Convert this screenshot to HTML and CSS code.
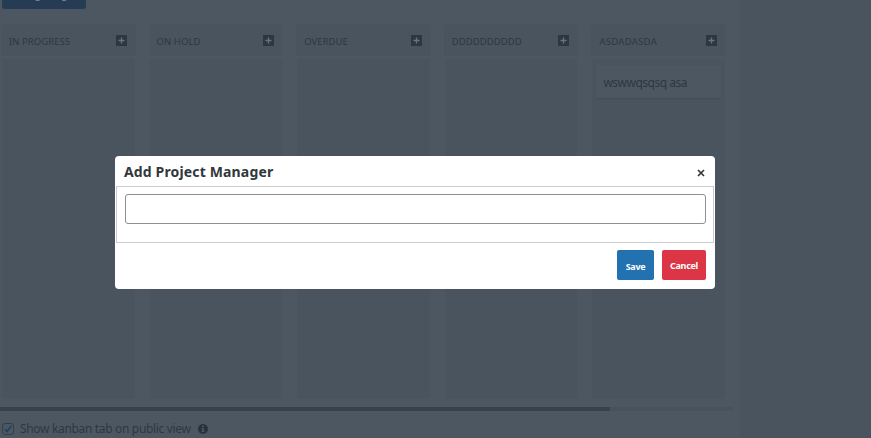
FILE: index.html
```html
<!DOCTYPE html>
<html lang="en">
<head>
<meta charset="utf-8">
<title>Project board</title>
<link rel="stylesheet" href="styles.css">
</head>
<body>
<main class="page">
  <button class="stage-button">Assign Tags</button>
  <div class="board">
    <section class="column">
      <header class="column-head"><span class="column-name">IN PROGRESS</span><svg class="plus" viewBox="0 0 11 11"><path class="plus-box" d="M0 0h11v11H0z"/><path class="plus-sign" d="M2.5 5.5h6M5.5 2.5v6"/></svg></header>
      <div class="column-body"></div>
    </section>
    <section class="column">
      <header class="column-head"><span class="column-name">ON HOLD</span><svg class="plus" viewBox="0 0 11 11"><path class="plus-box" d="M0 0h11v11H0z"/><path class="plus-sign" d="M2.5 5.5h6M5.5 2.5v6"/></svg></header>
      <div class="column-body"></div>
    </section>
    <section class="column">
      <header class="column-head"><span class="column-name">OVERDUE</span><svg class="plus" viewBox="0 0 11 11"><path class="plus-box" d="M0 0h11v11H0z"/><path class="plus-sign" d="M2.5 5.5h6M5.5 2.5v6"/></svg></header>
      <div class="column-body"></div>
    </section>
    <section class="column">
      <header class="column-head"><span class="column-name">DDDDDDDDDD</span><svg class="plus" viewBox="0 0 11 11"><path class="plus-box" d="M0 0h11v11H0z"/><path class="plus-sign" d="M2.5 5.5h6M5.5 2.5v6"/></svg></header>
      <div class="column-body"></div>
    </section>
    <section class="column">
      <header class="column-head"><span class="column-name name-wide">ASDADASDA</span><svg class="plus" viewBox="0 0 11 11"><path class="plus-box" d="M0 0h11v11H0z"/><path class="plus-sign" d="M2.5 5.5h6M5.5 2.5v6"/></svg></header>
      <div class="column-body"><article class="card">wswwqsqsq asa</article></div>
    </section>
  </div>
  <div class="scrollbar"><div class="thumb"></div></div>
  <div class="public-option">
    <svg class="check" viewBox="0 0 12 12"><rect x=".5" y=".5" width="11" height="11" rx="2.5"/><path d="M3 6.2l2 2.4 4.3-5.7"/></svg>
    <span class="option-label">Show kanban tab on public view</span>
    <svg class="info" viewBox="0 0 10 10"><circle cx="5" cy="5" r="5"/><path d="M4.1 1.5h1.8v1.5H4.1zM3.6 3.9h2.3v3h.6v1.2h-3V6.9h.7V5h-.6z"/></svg>
  </div>
</main>
<div class="modal" role="dialog">
  <header class="modal-head"><h1 class="modal-title">Add Project Manager</h1><svg class="close" viewBox="0 0 8 8"><path d="M1 1l6 6M7 1L1 7"/></svg></header>
  <div class="modal-body"><input class="field" type="text" aria-label="Project manager"></div>
  <footer class="modal-foot"><button class="button save">Save</button><button class="button cancel">Cancel</button></footer>
</div>
</body>
</html>
```
FILE: styles.css
```css
* { box-sizing: border-box; }
body {
  margin: 0;
  height: 438px;
  overflow: hidden;
  background: #4a545f;
  color: #2d3743;
  font-family: "Noto Sans", "Open Sans", sans-serif;
}
.page {
  width: 741px;
  height: 438px;
  overflow: hidden;
  background: #4d5762;
  border-right: 1px solid #4b5560;
}
.stage-button {
  display: block;
  width: 84px;
  height: 30px;
  margin: -21px 0 0 2px;
  padding: 0;
  border: 0;
  border-radius: 3px;
  background: #253c54;
  color: #7d868e;
  font: 10.5px/26px "Noto Sans", sans-serif;
}
.board {
  display: flex;
  gap: 13px;
  margin: 15px 0 0 1px;
  width: 725px;
}
.column { flex: 1; }
.column-head {
  display: flex;
  align-items: flex-start;
  justify-content: space-between;
  height: 32px;
  padding: 11px 9px 0 8px;
  border-radius: 3px 3px 0 0;
  background: #4a545f;
}
.column-name {
  margin-top: 1px;
  font-size: 9.5px;
  line-height: 12px;
  letter-spacing: .05px;
  white-space: nowrap;
}
.name-wide { letter-spacing: .3px; }
.plus { width: 11px; height: 11px; flex: none; }
.plus-box { fill: #2d3743; }
.plus-sign { fill: none; stroke: #6a737d; stroke-width: 1.3; }
.column-body {
  height: 340px;
  margin: 3px 1px 0;
  padding: 6px 4px;
  background: #4a545f;
}
.card {
  height: 33px;
  padding: 8px 7px;
  background: #4d5762;
  box-shadow: 0 1px 1px #424d58;
  font-size: 12px;
  line-height: 19px;
  letter-spacing: -.5px;
  white-space: nowrap;
}
.scrollbar { width: 733px; height: 4px; margin-top: 8px; background: #48525d; }
.thumb { width: 610px; height: 4px; background: #38424d; }
.public-option {
  display: flex;
  align-items: center;
  height: 17px;
  margin: 9px 0 0 2px;
}
.check { width: 12px; height: 12px; fill: none; stroke: #333e4a; }
.check path { stroke: #253f59; stroke-width: 1.6; }
.option-label {
  width: 171px;
  margin-left: 6px;
  font-size: 12px;
  line-height: 17px;
  letter-spacing: -.33px;
  white-space: nowrap;
}
.info { width: 10px; height: 10px; margin-left: 7px; fill: #28323e; }
.info path { fill: #4d5762; }
.modal {
  position: absolute;
  left: 115px;
  top: 156px;
  width: 600px;
  height: 133px;
  border-radius: 4px;
  background: #fff;
}
.modal-head {
  display: flex;
  align-items: center;
  justify-content: space-between;
  height: 30px;
  padding: 0 10px 0 9px;
}
.modal-title {
  margin: 2px 0 0;
  color: #32373c;
  font-size: 14px;
  line-height: 20px;
  letter-spacing: .15px;
  white-space: nowrap;
}
.close { width: 8px; height: 8px; margin-top: 3px; fill: none; stroke: #32373c; stroke-width: 1.7; }
.modal-body {
  height: 57px;
  margin: 0 1px;
  padding: 7px 7px 0 8px;
  border: 1px solid #ccc;
}
.field {
  display: block;
  width: 581px;
  height: 30px;
  border: 1px solid #8c8f94;
  border-radius: 3px;
  background: #fff;
  outline: 0;
}
.modal-foot { display: flex; justify-content: flex-end; gap: 8px; padding: 7px 9px 0; }
.button {
  height: 30px;
  padding: 0;
  border: 0;
  border-radius: 2px;
  color: #fff;
  font: bold 9px/12px "Noto Sans", sans-serif;
  letter-spacing: -.3px;
}
.save { width: 37px; padding-top: 3px; background: #2271b1; }
.cancel { width: 44px; padding-top: 1px; background: #dc3545; }
```
